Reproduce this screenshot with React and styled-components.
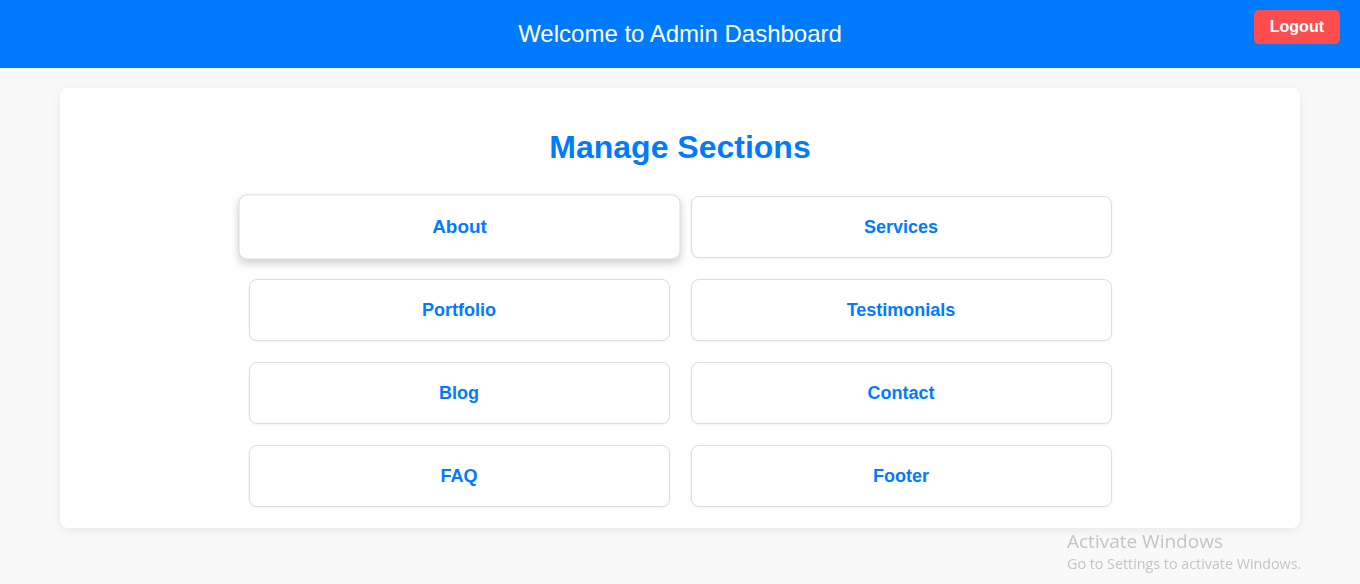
import styled, { createGlobalStyle } from "styled-components";

const GlobalStyle = createGlobalStyle`
body {
    margin: 0;
    background: #f9f9f9;
    font-family: "Liberation Sans", Arial, sans-serif;
}
`;

const Header = styled.header`
display: grid;
grid-template-columns: 1fr auto 1fr;
align-items: center;
height: 68px;
padding: 0 20px;
background: #007bff;
color: white;
`;

const HeaderTitle = styled.h1`
grid-column: 2;
margin: 0;
font-size: 24px;
font-weight: normal;
`;

const LogoutButton = styled.button`
grid-column: 3;
justify-self: end;
align-self: start;
margin-top: 10px;
padding: 8px 16px;
border: none;
border-radius: 5px;
background: #ff4d4d;
color: white;
font-family: inherit;
font-size: 16px;
font-weight: bold;
cursor: pointer;
`;

const Card = styled.main`
max-width: 1200px;
margin: 20px auto;
padding: 20px 20px 21px;
background: white;
border-radius: 8px;
box-shadow: 0 2px 10px rgba(0, 0, 0, 0.08);
`;

const Heading = styled.h2`
margin: 21px 0 30px;
text-align: center;
color: #007bff;
font-size: 32px;
`;

const Grid = styled.div`
display: grid;
grid-template-columns: repeat(2, 421px);
justify-content: center;
gap: 21px;
`;

const SectionButton = styled.button`
height: 62px;
border: 1px solid #ddd;
border-radius: 8px;
background: white;
color: #007bff;
font-family: inherit;
font-size: 18px;
font-weight: bold;
cursor: pointer;
box-shadow: ${({ $hover }) => ($hover ? "0 4px 8px rgba(0, 0, 0, 0.18)" : "0 1px 3px rgba(0, 0, 0, 0.06)")};
transform: ${({ $hover }) => ($hover ? "scale(1.05)" : "none")};
transition: transform 0.2s, box-shadow 0.2s;
`;

const Watermark = styled.div`
position: fixed;
left: 1067px;
top: 529px;
color: #c4c4c4;
font-family: "Open Sans", sans-serif;
pointer-events: none;
`;

const WatermarkTitle = styled.div`
font-size: 19px;
line-height: 24px;
`;

const WatermarkText = styled.div`
font-size: 14.3px;
line-height: 21px;
`;

const sections = ["About", "Services", "Portfolio", "Testimonials", "Blog", "Contact", "FAQ", "Footer"];

const App = () => {
    return (
        <>
            <GlobalStyle />
            <Header>
                <HeaderTitle>Welcome to Admin Dashboard</HeaderTitle>
                <LogoutButton>Logout</LogoutButton>
            </Header>

            <Card>
                <Heading>Manage Sections</Heading>
                <Grid>
                    {sections.map((name, i) => (
                        <SectionButton key={name} $hover={i === 0}>{name}</SectionButton>
                    ))}
                </Grid>
            </Card>

            <Watermark>
                <WatermarkTitle>Activate Windows</WatermarkTitle>
                <WatermarkText>Go to Settings to activate Windows.</WatermarkText>
            </Watermark>
        </>
    );
};

export default App;
